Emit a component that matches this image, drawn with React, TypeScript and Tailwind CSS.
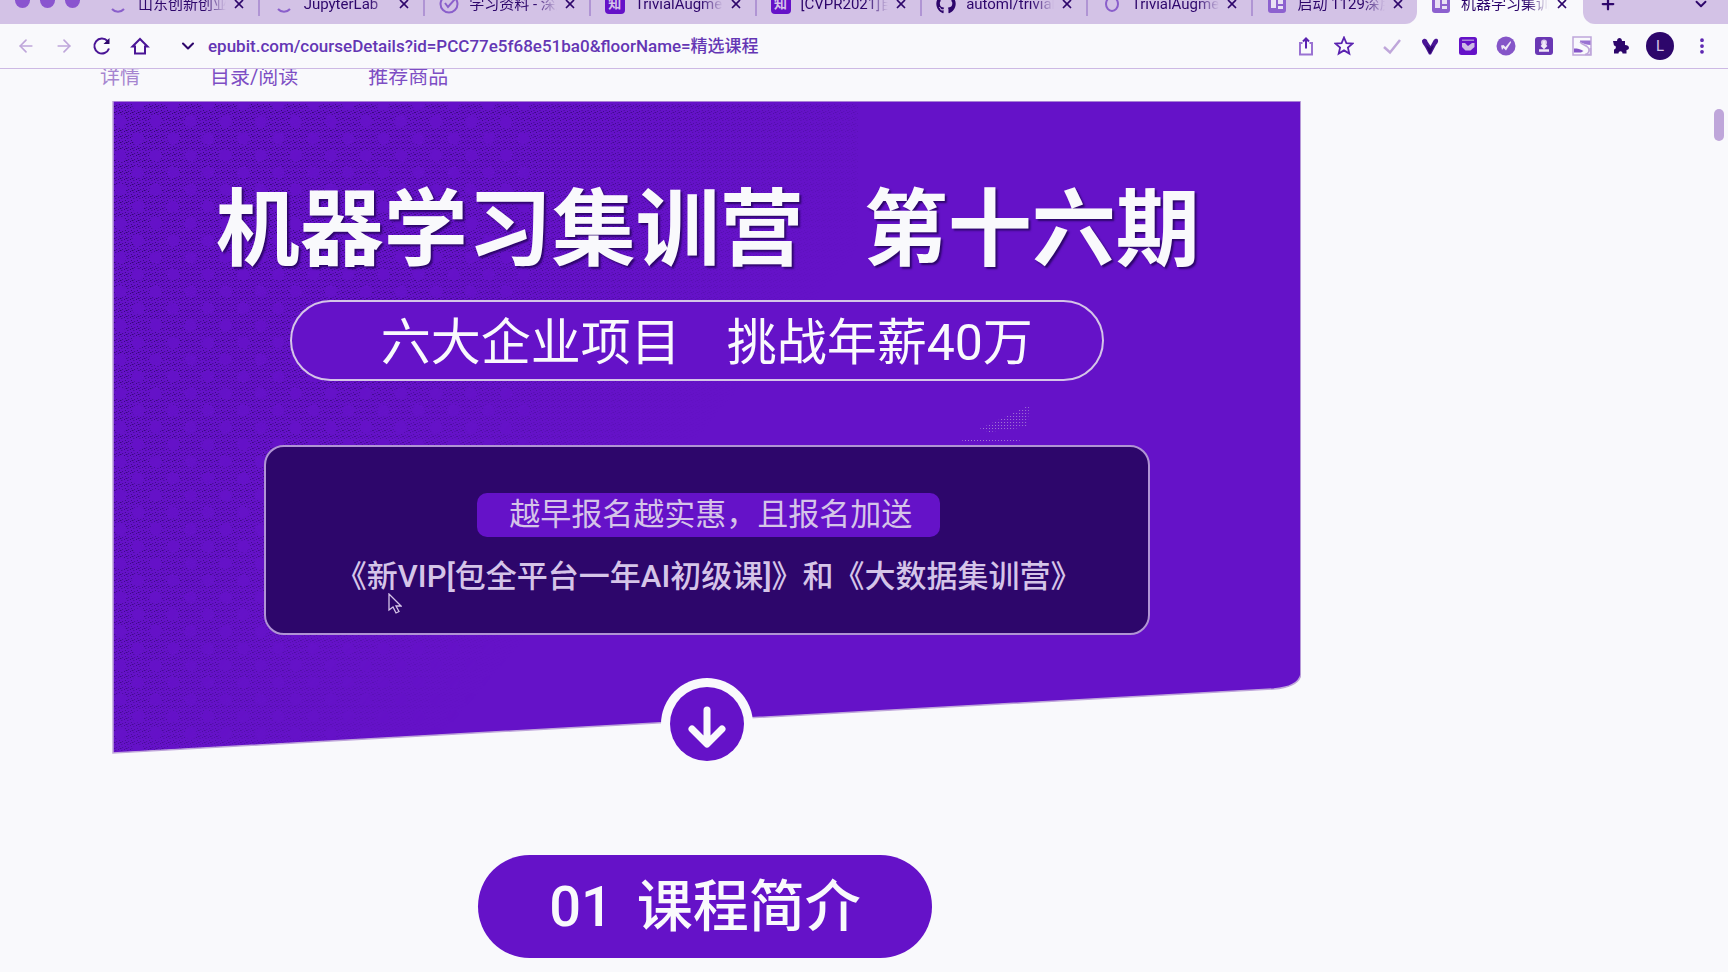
import React from "react";
import { ArrowLeft, ArrowRight, ChevronDown, MoreVertical, Plus, X } from "lucide-react";
import { FaGithub } from "react-icons/fa";

type IconKind = "ring" | "check" | "zhi" | "github" | "box" | "circle";
type TabInfo = { title: string; icon: IconKind };

const tabs: TabInfo[] = [
  { title: "山东创新创业", icon: "ring" },
  { title: "JupyterLab", icon: "ring" },
  { title: "学习资料 - 深度", icon: "check" },
  { title: "TrivialAugment", icon: "zhi" },
  { title: "[CVPR2021]自", icon: "zhi" },
  { title: "automl/trivialaug", icon: "github" },
  { title: "TrivialAugment", icon: "circle" },
  { title: "启动 1129深度", icon: "box" },
];

function TabIcon({ kind }: { kind: IconKind }) {
  if (kind === "zhi")
    return (
      <span className="flex size-5 shrink-0 items-center justify-center rounded bg-[#6512c8] text-[13px] font-bold text-[#d5c4e8]">
        知
      </span>
    );
  if (kind === "github") return <FaGithub className="size-5 shrink-0 text-[#2d066b]" />;
  if (kind === "box")
    return (
      <svg viewBox="0 0 20 20" className="size-5 shrink-0" fill="none" aria-hidden="true">
        <rect x="1" y="1" width="18" height="18" rx="3" fill="#8d61cf" />
        <path d="M4 4h5v10H4zM11 4h5v6h-5zM11 12h5v3h-5z" fill="#e9e0f4" />
      </svg>
    );
  return (
    <svg viewBox="0 0 20 20" className="size-5 shrink-0" fill="none" stroke="#8a5fcb" strokeWidth="2" aria-hidden="true">
      {kind === "ring" && <path d="M4 15a8 8 0 0 0 12 0" />}
      {kind === "circle" && <ellipse cx="10" cy="10" rx="6" ry="7" />}
      {kind === "check" && (
        <>
          <circle cx="10" cy="10" r="8.5" />
          <path d="m6 9 3 4 7-8" />
        </>
      )}
    </svg>
  );
}

function Tab({ tab, active = false }: { tab: TabInfo; active?: boolean }) {
  return (
    <div className={active ? "flex w-[9.6%] items-center pl-3.5 pr-3.5" : "flex min-w-0 flex-1 items-center pl-3.5 pr-3"}>
      <TabIcon kind={tab.icon} />
      <a
        href="#tab"
        className="ml-2.5 min-w-0 flex-1 overflow-hidden whitespace-nowrap text-[15px] leading-6 [mask-image:linear-gradient(to_right,black_75%,transparent)]"
      >
        {tab.title}
      </a>
      <button type="button" aria-label="关闭标签页" className="ml-1.5 shrink-0">
        <X className="size-3.5" strokeWidth={3} />
      </button>
    </div>
  );
}

function TabBar() {
  return (
    <div className="h-6 overflow-hidden">
      <div className="-mt-4 flex h-10">
        <div className="flex w-[82%] items-center rounded-br-xl bg-[#d3c2e6]">
          <div className="flex w-[94px] shrink-0 items-center gap-2.5 pb-2 pl-[15px]">
            <span className="size-[15px] rounded-full bg-[#8a55cf]" />
            <span className="size-[15px] rounded-full bg-[#8a55cf]" />
            <span className="size-[15px] rounded-full bg-[#8a55cf]" />
          </div>
          <div className="flex min-w-0 flex-1 divide-x-2 divide-[#b094d4]">
            {tabs.map((tab, i) => (
              <Tab key={i} tab={tab} />
            ))}
          </div>
        </div>
        <Tab tab={{ title: "机器学习集训营", icon: "box" }} active />
        <div className="flex flex-1 items-center justify-between rounded-bl-xl bg-[#d3c2e6] pl-4 pr-[18px]">
          <button type="button" aria-label="新标签页">
            <Plus className="size-[18px]" strokeWidth={3} />
          </button>
          <button type="button" aria-label="搜索标签页">
            <ChevronDown className="size-[18px]" strokeWidth={2.5} />
          </button>
        </div>
      </div>
    </div>
  );
}

const extensions: { name: string; icon: React.ReactNode }[] = [
  {
    name: "分享",
    icon: (
      <g fill="none" strokeWidth="2">
        <path d="M6.5 7H4v11.500h12V7h-2.500" stroke="#9a72d2" />
        <path d="M10 12.500V2.500M7 5.500l3-3 3 3" stroke="#5a22b0" />
      </g>
    ),
  },
  {
    name: "收藏",
    icon: (
      <path
        d="m10 1.500 2.400 5.600 6.100.5-4.600 4 1.400 6-5.300-3.200-5.300 3.200 1.400-6-4.600-4 6.100-.5z"
        fill="none"
        stroke="#5a22b0"
        strokeWidth="1.800"
      />
    ),
  },
  { name: "检查", icon: <path d="m2 11 6 5.500L18 4" fill="none" stroke="#bfa6da" strokeWidth="2.500" /> },
  {
    name: "翻译",
    icon: (
      <>
        <path d="M2 4.500C4 1.500 7 3 7.500 5.500L10.500 10 13.500 4.500c1-2 4-2.500 4.500-.5s-.5 3-2 5L11 18.500H9L5 11C4 9 1.500 7 2 4.500z" fill="#4a1596" />
        <path d="m6 9 4 3 4-3-3.500 8.500h-1z" fill="#2d066b" />
      </>
    ),
  },
  {
    name: "书签",
    icon: (
      <>
        <rect x="1" y="1" width="18" height="18" rx="2.500" fill="#6512c8" />
        <path d="M4 3.500h12V5H4z" fill="#a987d6" />
        <path d="M4 7h3l3 3 4-3h2.500v4l-4 3.500h-5L4 11z" fill="#cdb9e4" />
      </>
    ),
  },
  {
    name: "画笔",
    icon: (
      <>
        <circle cx="10" cy="10" r="9.500" fill="#8555c8" />
        <path d="m5 9.500 2.500-.5 2 2L14.500 5 15 6.500 10 14.500 7.500 12 6 14z" fill="#f0e8f7" />
      </>
    ),
  },
  {
    name: "下载",
    icon: (
      <>
        <rect x="1" y="1" width="18" height="18" rx="3" fill="#6a38b4" />
        <circle cx="10" cy="6.500" r="3" fill="#d5c4e8" />
        <path d="M10 5v6M7.500 9l2.500 2.500L12.500 9M5 14.500h10" fill="none" stroke="#f0e8f7" strokeWidth="2.500" />
      </>
    ),
  },
  {
    name: "样式",
    icon: (
      <>
        <rect x="1" y="1" width="18" height="18" fill="none" stroke="#bfa6da" strokeWidth="1.500" />
        <path d="M8 4.500h10.500V9C15 9 12 7.500 8 6.500z" fill="#9a72d2" />
        <path d="M2 12.500c4 0 6 .5 9.500 2.500L9 16.500H2z" fill="#8555c8" />
        <path d="M8 6c3 4 9 3 9 8 0 3-2 4-4 4.500h5.500V12" fill="none" stroke="#bfa6da" strokeWidth="1.500" />
      </>
    ),
  },
  {
    name: "扩展程序",
    icon: <path d="M3 5h4c0-4 5-4 5 0h3v4c5 0 5 5 1.500 5v3.500h-4c0-3-4-3-4 0H4v-4c2.500-.5 2.500-4 0-4z" fill="#2d066b" />,
  },
];

function Toolbar() {
  return (
    <div className="flex h-[45px] items-center border-b border-[#cdb9e4] px-4">
      <div className="flex items-center gap-[18px]">
        <button type="button" aria-label="后退" className="text-[#bfa6da]">
          <ArrowLeft className="size-5" />
        </button>
        <button type="button" aria-label="前进" className="text-[#bfa6da]">
          <ArrowRight className="size-5" />
        </button>
        <button type="button" aria-label="刷新">
          <svg viewBox="0 0 20 20" className="size-5" fill="none" stroke="#4a1596" strokeWidth="2">
            <path d="M17 12.500A7.500 7.500 0 1 1 15.500 5" />
            <path d="M17.500 2v6h-6z" fill="#2d066b" stroke="none" />
          </svg>
        </button>
        <button type="button" aria-label="主页">
          <svg viewBox="0 0 20 20" className="size-5" fill="none" stroke="#4a1596" strokeWidth="2">
            <path d="M2.500 10.500 10 3l7.500 7.500H15v7H5v-7z" />
          </svg>
        </button>
      </div>
      <ChevronDown className="ml-7 size-5" strokeWidth={2.5} />
      <label htmlFor="address" className="sr-only">
        地址栏
      </label>
      <input
        id="address"
        defaultValue="epubit.com/courseDetails?id=PCC77e5f68e51ba0&floorName=精选课程"
        className="ml-2.5 min-w-0 flex-1 bg-transparent font-['Roboto','Noto_Sans_CJK_SC',sans-serif] text-[17px] leading-6 font-medium text-[#6436b4] outline-none"
      />
      <div className="flex items-center gap-[18px]">
        {extensions.map((item, i) => (
          <button key={item.name} type="button" aria-label={item.name} className={i === 2 ? "ml-2.5" : ""}>
            <svg viewBox="0 0 20 20" className="size-5">
              {item.icon}
            </svg>
          </button>
        ))}
        <button
          type="button"
          aria-label="用户"
          className="-ml-0.5 flex size-7 items-center justify-center rounded-full bg-[#2d066b] text-[15px] text-[#d5c4e8]"
        >
          L
        </button>
        <button type="button" aria-label="菜单">
          <MoreVertical className="size-5 text-[#5a22b0]" strokeWidth={2.5} />
        </button>
      </div>
    </div>
  );
}

function BannerShape() {
  return (
    <svg viewBox="0 0 1187 653" preserveAspectRatio="none" className="absolute inset-0 size-full" aria-hidden="true">
      <defs>
        <pattern id="grain" width="6" height="6" patternUnits="userSpaceOnUse" shapeRendering="crispEdges">
          <path d="M0 0h1v1H0zM3 1h1v1H3zM1 3h1v1H1zM4 4h1v1H4zM2 5h1v1H2z" fill="#2d066b" />
        </pattern>
        <pattern id="spots" x="-9" y="12" width="35" height="34" patternUnits="userSpaceOnUse">
          <circle cx="17.500" cy="8.500" r="6" fill="#6512c8" />
          <circle cx="0" cy="25.500" r="6" fill="#6512c8" />
          <circle cx="35" cy="25.500" r="6" fill="#6512c8" />
        </pattern>
        <pattern id="mist" width="3" height="3" patternUnits="userSpaceOnUse" shapeRendering="crispEdges">
          <path d="M0 0h1v1H0z" fill="#bfa6da" />
        </pattern>
        <linearGradient id="fade" gradientUnits="userSpaceOnUse" x1="0" y1="0" x2="560" y2="480">
          <stop offset="0" stopColor="#fff" />
          <stop offset="0.5" stopColor="#fff" stopOpacity="0.7" />
          <stop offset="0.9" stopColor="#fff" stopOpacity="0" />
        </linearGradient>
        <mask id="fadeMask">
          <rect width="745" height="653" fill="url(#fade)" />
        </mask>
      </defs>
      <path d="M1 0H1187V574Q1184 586 1160 588L1 652Z" fill="#6512c8" stroke="#bfa6da" strokeWidth="1.500" />
      <g mask="url(#fadeMask)">
        <path d="M2 2H745V610L2 651Z" fill="url(#grain)" />
        <path d="M2 2H420V628L2 651Z" fill="url(#spots)" />
      </g>
      <path d="m866 328 50-24-2 22-38 5zM836 342l20-4h45l16 4z" fill="url(#mist)" />
    </svg>
  );
}

function Banner() {
  return (
    <section className="relative ml-[6.5%] flex h-[653px] w-[68.8%] flex-col items-center text-[#f9f9fc]">
      <BannerShape />
      <h1 className="relative mt-[88px] flex gap-[60px] pl-0.5 text-[84px] leading-[84px] font-bold whitespace-nowrap [text-shadow:2px_2px_2px_#2d066b]">
        <span>机器学习集训营</span>
        <span>第十六期</span>
      </h1>
      <p className="relative mt-[27px] mr-5 flex h-[81px] w-[68.5%] items-center justify-center gap-[46px] rounded-full border-2 border-[#d5c4e8] bg-[#6512c8] pt-1 pl-5 text-[50px] leading-[60px] whitespace-nowrap">
        <span>六大企业项目</span>
        <span>挑战年薪40万</span>
      </p>
      <div className="relative mt-16 flex h-[190px] w-[74.5%] flex-col items-center rounded-[20px] border-2 border-[#b094d4] bg-[#2d066b] pt-[46px] text-[31px] whitespace-nowrap text-[#d5c4e8]">
        <p className="ml-1 rounded-[10px] bg-[#6512c8] pr-7 pl-8 leading-[44px]">越早报名越实惠，且报名加送</p>
        <p className="mt-[18px] ml-1 leading-[44px] font-medium">《新VIP[包全平台一年AI初级课]》和《大数据集训营》</p>
        <svg viewBox="0 0 14 22" className="absolute top-[146px] left-[122px] h-[22px] w-3.5" aria-hidden="true">
          <path d="M1 1v16l4-3 3 6 3-1.500-3-5.500h5z" fill="#2d066b" stroke="#d5c4e8" strokeWidth="1.300" />
        </svg>
      </div>
      <button type="button" aria-label="向下滚动" className="absolute top-[577px] left-1/2 -translate-x-1/2">
        <svg viewBox="0 0 92 92" className="size-[92px]" fill="none">
          <circle cx="46" cy="46" r="46" fill="#f9f9fc" />
          <circle cx="46" cy="46" r="37" fill="#6512c8" />
          <path d="M46 32v33M31 51l15 15 15-15" stroke="#f9f9fc" strokeWidth="7" strokeLinecap="round" strokeLinejoin="round" />
        </svg>
      </button>
    </section>
  );
}

export default function App() {
  return (
    <div className="relative min-h-screen overflow-hidden bg-[#f9f9fc] font-['Roboto','Noto_Sans_CJK_SC',sans-serif] text-[#2d066b]">
      <TabBar />
      <Toolbar />
      <nav className="flex h-8 items-start gap-[70px] overflow-hidden pl-[100px] text-[20px] leading-6 text-[#7d4ec4]">
        <a href="#details" className="-mt-1 text-[#a685d0]">详情</a>
        <a href="#catalog" className="-mt-1">目录/阅读</a>
        <a href="#recommended" className="-mt-1">推荐商品</a>
      </nav>
      <main>
        <Banner />
        <div className="ml-[6.5%] flex w-[68.6%] justify-center pt-[101px]">
          <h2 className="flex h-[103px] w-[454px] items-center justify-center gap-6 rounded-full bg-[#6512c8] text-[56px] font-medium whitespace-nowrap text-[#f9f9fc]">
            <span>01</span>
            <span>课程简介</span>
          </h2>
        </div>
      </main>
      <div className="absolute top-[109px] right-1 h-8 w-2.5 rounded-full bg-[#bfa6da]" />
    </div>
  );
}
